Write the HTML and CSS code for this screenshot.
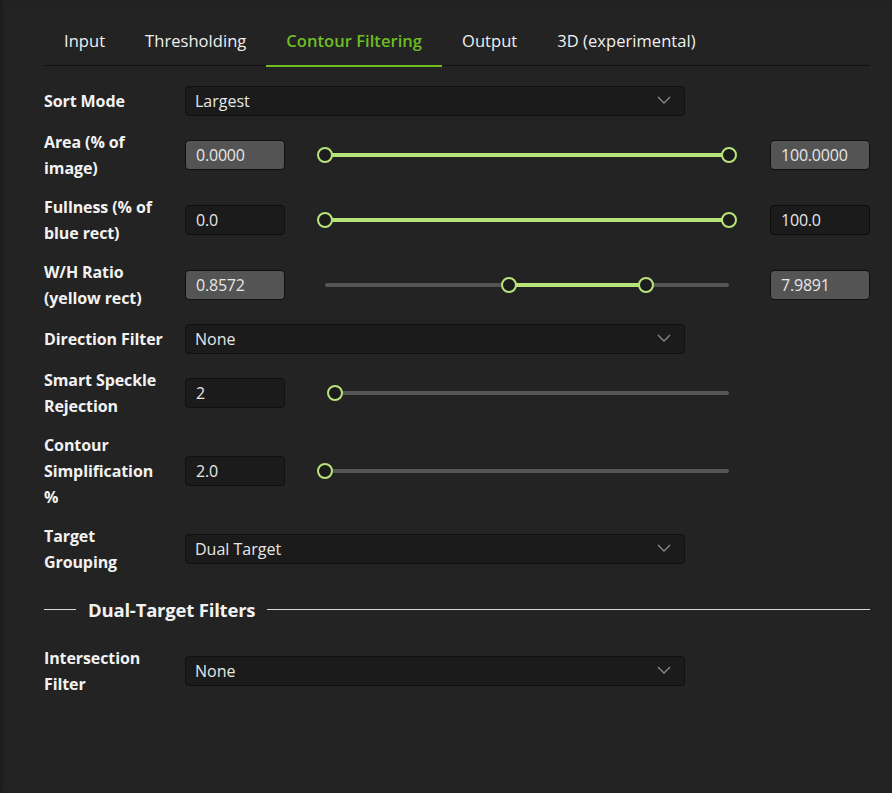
FILE: index.html
```html
<!DOCTYPE html>
<html>
<head>
<meta charset="utf-8">
<link rel="stylesheet" href="styles.css">
</head>
<body>
<div class="page">
  <div class="tabs">
    <div class="tab">Input</div>
    <div class="tab">Thresholding</div>
    <div class="tab active">Contour Filtering</div>
    <div class="tab">Output</div>
    <div class="tab">3D (experimental)</div>
  </div>

  <div class="form">
    <div class="row">
      <div class="label">Sort Mode</div>
      <div class="select"><span>Largest</span><svg class="chev" width="14" height="8" viewBox="0 0 14 8"><path d="M1 1 L7 7 L13 1" fill="none" stroke="#8a8a8a" stroke-width="1.3"/></svg></div>
    </div>

    <div class="row">
      <div class="label">Area (% of<br>image)</div>
      <div class="num grey">0.0000</div>
      <div class="slider">
        <div class="track"></div>
        <div class="fill" style="left:0px;width:404px"></div>
        <div class="thumb" style="left:0px"></div>
        <div class="thumb" style="left:404px"></div>
      </div>
      <div class="num grey">100.0000</div>
    </div>

    <div class="row">
      <div class="label">Fullness (% of<br>blue rect)</div>
      <div class="num">0.0</div>
      <div class="slider">
        <div class="track"></div>
        <div class="fill" style="left:0px;width:404px"></div>
        <div class="thumb" style="left:0px"></div>
        <div class="thumb" style="left:404px"></div>
      </div>
      <div class="num">100.0</div>
    </div>

    <div class="row">
      <div class="label">W/H Ratio<br>(yellow rect)</div>
      <div class="num grey">0.8572</div>
      <div class="slider">
        <div class="track"></div>
        <div class="fill" style="left:184px;width:137px"></div>
        <div class="thumb" style="left:184px"></div>
        <div class="thumb" style="left:321px"></div>
      </div>
      <div class="num grey">7.9891</div>
    </div>

    <div class="row">
      <div class="label">Direction Filter</div>
      <div class="select"><span>None</span><svg class="chev" width="14" height="8" viewBox="0 0 14 8"><path d="M1 1 L7 7 L13 1" fill="none" stroke="#8a8a8a" stroke-width="1.3"/></svg></div>
    </div>

    <div class="row">
      <div class="label">Smart Speckle<br>Rejection</div>
      <div class="num">2</div>
      <div class="slider">
        <div class="track" style="left:10px"></div>
        <div class="thumb" style="left:10px"></div>
      </div>
    </div>

    <div class="row">
      <div class="label">Contour<br>Simplification<br>%</div>
      <div class="num">2.0</div>
      <div class="slider">
        <div class="track"></div>
        <div class="thumb" style="left:0px"></div>
      </div>
    </div>

    <div class="row">
      <div class="label">Target<br>Grouping</div>
      <div class="select"><span>Dual Target</span><svg class="chev" width="14" height="8" viewBox="0 0 14 8"><path d="M1 1 L7 7 L13 1" fill="none" stroke="#8a8a8a" stroke-width="1.3"/></svg></div>
    </div>
  </div>

  <div class="divider">
    <span class="line short"></span>
    <span class="dtitle">Dual-Target Filters</span>
    <span class="line"></span>
  </div>

  <div class="form second">
    <div class="row">
      <div class="label">Intersection<br>Filter</div>
      <div class="select"><span>None</span><svg class="chev" width="14" height="8" viewBox="0 0 14 8"><path d="M1 1 L7 7 L13 1" fill="none" stroke="#8a8a8a" stroke-width="1.3"/></svg></div>
    </div>
  </div>
</div>
</body>
</html>
```

FILE: styles.css
```css
html, body {
  margin: 0;
  padding: 0;
  background: #232323;
  height: 100%;
}
body {
  font-family: "Open Sans", "Noto Sans", sans-serif;
  color: #ececec;
  box-shadow: inset 4px 0 4px -2px rgba(0,0,0,0.25);
}
.page {
  padding: 17px 22px 0 44px;
}
.tabs {
  display: flex;
  height: 48px;
  border-bottom: 1px solid #111;
}
.tab {
  padding: 0 20px;
  font-size: 16.5px;
  line-height: 48px;
  color: #f0f0f0;
  position: relative;
  letter-spacing: 0.05px;
}
.tab.active {
  color: #6ebd23;
  font-weight: 600;
}
.tab.active::after {
  content: "";
  position: absolute;
  left: 0;
  right: 0;
  bottom: -2px;
  height: 2px;
  background: #6ebd23;
}
.form {
  margin-top: 20px;
  display: flex;
  flex-direction: column;
  gap: 13px;
}
.form.second {
  margin-top: 24px;
}
.row {
  display: flex;
  align-items: center;
  min-height: 30px;
}
.label {
  width: 141px;
  font-size: 16px;
  font-weight: 700;
  line-height: 26px;
  letter-spacing: -0.1px;
  color: #f2f2f2;
}
.select {
  height: 28px;
  border: 1px solid #0f0f0f;
  border-radius: 4px;
  background: #1b1b1b;
  display: flex;
  align-items: center;
  justify-content: space-between;
  padding: 0 13px 0 9px;
  box-sizing: content-box;
  width: 476px;
  font-size: 16px;
  color: #e6e6e6;
  letter-spacing: 0;
}
.chev {
  display: block;
  margin-top: -2px;
}
.num {
  width: 88px;
  height: 28px;
  border: 1px solid #0f0f0f;
  border-radius: 4px;
  background: #1b1b1b;
  padding: 0 0 0 10px;
  font-size: 16px;
  line-height: 28px;
  color: #e6e6e6;
  letter-spacing: -0.2px;
}
.num.grey {
  background: #545454;
}
.slider {
  position: relative;
  width: 404px;
  height: 30px;
  margin: 0 41px 0 40px;
}
.track {
  position: absolute;
  left: 0;
  right: 0;
  top: 13px;
  height: 4px;
  border-radius: 2px;
  background: #555;
}
.fill {
  position: absolute;
  top: 13px;
  height: 4px;
  background: #b8e47a;
}
.thumb {
  position: absolute;
  top: 7px;
  width: 12px;
  height: 12px;
  margin-left: -8px;
  border: 2px solid #b8e47a;
  border-radius: 50%;
  background: #1c1c1c;
}
.divider {
  display: flex;
  align-items: center;
  margin-top: 22px;
  height: 24px;
}
.line {
  flex: 1;
  height: 1px;
  background: #d8d8d8;
}
.line.short {
  flex: none;
  width: 32px;
}
.dtitle {
  padding: 0 12px;
  font-size: 18.5px;
  font-weight: 700;
  color: #f2f2f2;
  letter-spacing: -0.2px;
}
```
